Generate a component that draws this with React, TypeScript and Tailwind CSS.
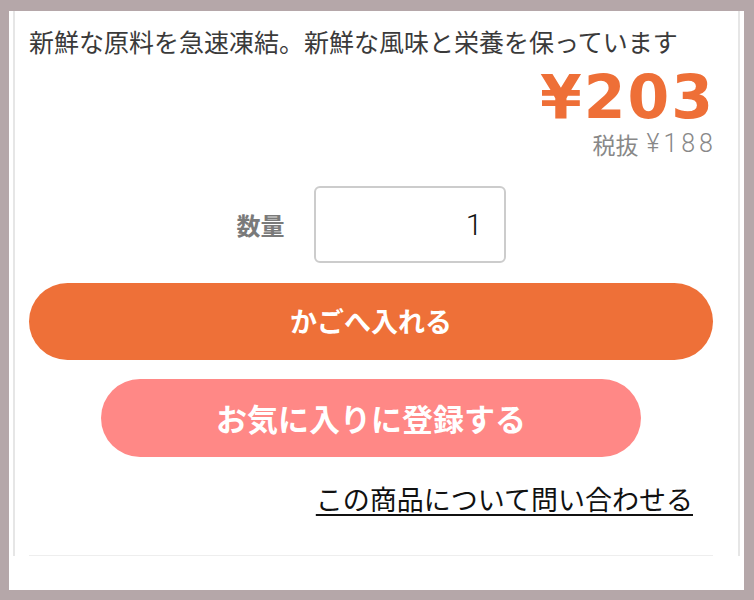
import React from "react";

export default function App() {
  const jp = { fontFamily: '"Noto Sans CJK JP", "Noto Sans", sans-serif' };
  return (
    <div className="w-[754px] h-[600px] bg-[#b5a7a9] pt-[11px] pl-[9px] pr-[10px] pb-[10px]">
      <div className="w-full h-full bg-white pl-[4px] pr-[4px]">
        <div className="h-[545px] border-l-2 border-r-2 border-[#e6e6e6] pl-[14px] pr-[25px] flex flex-col" style={jp}>
          <p className="mt-[12px] text-[25px] leading-[36px] text-[#3a3a3a] whitespace-nowrap">
            新鮮な原料を急速凍結。新鮮な風味と栄養を保っています
          </p>
          <div className="flex flex-col items-end">
            <div
              className="mt-[12px] text-[60px] leading-[52px] font-bold text-[#ee6f37] tracking-[2px] mr-[-2px]"
              style={{ fontFamily: '"DejaVu Sans", sans-serif' }}
            >
              ¥203
            </div>
            <div className="mt-[6px] leading-[30px] text-[#888888] whitespace-nowrap flex items-center">
              <span className="text-[23px]">税抜</span>
              <span
                className="ml-[8px] text-[25px] tracking-[4px] mr-[-4px]"
                style={{ fontFamily: 'Roboto, sans-serif', fontWeight: 300 }}
              >
                ¥188
              </span>
            </div>
          </div>
          <div className="mt-[27px] flex items-center justify-center gap-[29px]">
            <span className="text-[24px] font-bold text-[#7a7a7a]">数量</span>
            <div
              className="w-[192px] h-[77px] border-2 border-[#cccccc] rounded-[6px] flex items-center justify-end pr-[21px] text-[30px] text-[#111]"
              style={{ fontFamily: 'Roboto, sans-serif', fontWeight: 300 }}
            >
              1
            </div>
          </div>
          <button className="mt-[20px] h-[77px] w-full rounded-full bg-[#ee7038] text-white text-[27px] font-bold">
            かごへ入れる
          </button>
          <button className="mt-[19px] self-center h-[78px] w-[540px] rounded-full bg-[#ff8886] text-white text-[31px] font-bold">
            お気に入りに登録する
          </button>
          <div className="mt-[24px] flex justify-end pr-[20px]">
            <a className="text-[27px] leading-[36px] text-[#111] underline underline-offset-[4px]">
              この商品について問い合わせる
            </a>
          </div>
          <div className="mt-auto h-px bg-[#eeeeee]" />
        </div>
      </div>
    </div>
  );
}
